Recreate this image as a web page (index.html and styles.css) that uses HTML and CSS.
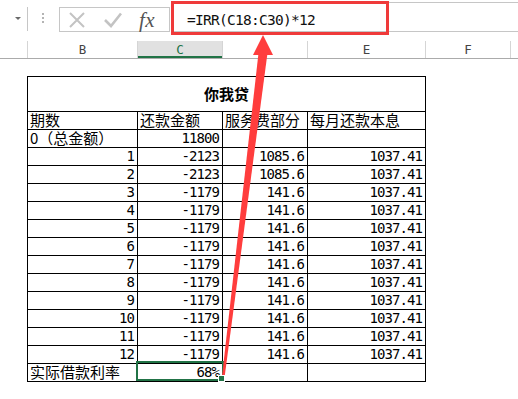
FILE: index.html
```html
<!DOCTYPE html>
<html lang="zh-CN">
<head>
<meta charset="utf-8">
<title>IRR</title>
<link rel="stylesheet" href="styles.css">
</head>
<body>
<div class="toolbar">
  <div class="namebox"><span class="caret"></span></div>
  <div class="grip"><i></i><i></i><i></i></div>
  <div class="fxbox">
    <svg class="ico-x" width="16" height="16" viewBox="0 0 16 16"><path d="M1 1 L15 15 M15 1 L1 15" stroke="#c3c3c3" stroke-width="2" fill="none"/></svg>
    <svg class="ico-ok" width="18" height="16" viewBox="0 0 18 16"><path d="M1 8 L7 14 L17 1.5" stroke="#c3c3c3" stroke-width="2.6" fill="none"/></svg>
    <span class="fx">fx</span>
  </div>
  <div class="formula">=IRR(C18:C30)*12</div>
  <div class="callout"></div>
</div>
<div class="colheads">
  <div class="ch a"></div>
  <div class="ch b">B</div>
  <div class="ch c sel">C</div>
  <div class="ch d">D</div>
  <div class="ch e">E</div>
  <div class="ch f">F</div>
  <div class="ch g"></div>
</div>
<div class="sheet">
  <div class="grid">
    <div class="cell title">你我贷</div>
    <div class="cell">期数</div><div class="cell">还款金额</div><div class="cell">服务费部分</div><div class="cell">每月还款本息</div>
    <div class="cell">0（总金额）</div><div class="cell n">11800</div><div class="cell"></div><div class="cell"></div>
    <div class="cell n">1</div><div class="cell n">-2123</div><div class="cell n">1085.6</div><div class="cell n">1037.41</div>
    <div class="cell n">2</div><div class="cell n">-2123</div><div class="cell n">1085.6</div><div class="cell n">1037.41</div>
    <div class="cell n">3</div><div class="cell n">-1179</div><div class="cell n">141.6</div><div class="cell n">1037.41</div>
    <div class="cell n">4</div><div class="cell n">-1179</div><div class="cell n">141.6</div><div class="cell n">1037.41</div>
    <div class="cell n">5</div><div class="cell n">-1179</div><div class="cell n">141.6</div><div class="cell n">1037.41</div>
    <div class="cell n">6</div><div class="cell n">-1179</div><div class="cell n">141.6</div><div class="cell n">1037.41</div>
    <div class="cell n">7</div><div class="cell n">-1179</div><div class="cell n">141.6</div><div class="cell n">1037.41</div>
    <div class="cell n">8</div><div class="cell n">-1179</div><div class="cell n">141.6</div><div class="cell n">1037.41</div>
    <div class="cell n">9</div><div class="cell n">-1179</div><div class="cell n">141.6</div><div class="cell n">1037.41</div>
    <div class="cell n">10</div><div class="cell n">-1179</div><div class="cell n">141.6</div><div class="cell n">1037.41</div>
    <div class="cell n">11</div><div class="cell n">-1179</div><div class="cell n">141.6</div><div class="cell n">1037.41</div>
    <div class="cell n">12</div><div class="cell n">-1179</div><div class="cell n">141.6</div><div class="cell n">1037.41</div>
    <div class="cell">实际借款利率</div><div class="cell n active">68%</div><div class="cell"></div><div class="cell"></div>
  </div>
</div>
<svg class="arrow" width="518" height="399" viewBox="0 0 518 399">
  <polygon points="258.5,53 267.5,53 224.2,380 221.6,380" fill="#ff3d3d"/>
  <polygon points="263,35 273,55 253,55" fill="#ff3d3d"/>
</svg>
</body>
</html>
```

FILE: styles.css
```css
html, body {
  margin: 0;
  padding: 0;
}

body {
  width: 518px;
  height: 399px;
  overflow: hidden;
  position: relative;
  background: #ffffff;
  font-family: "Noto Sans CJK SC", "Noto Sans", sans-serif;
  color: #000;
}

/* ---------- toolbar / formula bar ---------- */
.toolbar {
  position: relative;
  height: 41px;
  display: flex;
  align-items: flex-start;
}

.namebox {
  width: 28px;
  height: 24px;
  margin-top: 7px;
  box-sizing: border-box;
  border-right: 1px solid #c6c6c6;
  display: flex;
  justify-content: flex-end;
  align-items: center;
  padding-right: 6px;
}

.caret {
  width: 0;
  height: 0;
  border-left: 3.5px solid transparent;
  border-right: 3.5px solid transparent;
  border-top: 3.5px solid #6a6a6a;
  margin-top: -2px;
}

.grip {
  margin-left: 14px;
  margin-top: 13px;
  display: flex;
  flex-direction: column;
  gap: 2px;
}

.grip i {
  display: block;
  width: 2px;
  height: 2px;
  background: #b4b4b4;
}

.fxbox {
  margin-left: 15px;
  margin-top: 7px;
  width: 111px;
  height: 25px;
  box-sizing: border-box;
  border: 1px solid #c6c6c6;
  display: flex;
  align-items: center;
  padding-left: 9px;
}

.ico-x {
  display: block;
  margin-top: 1px;
}

.ico-ok {
  display: block;
  margin-left: 19px;
  margin-top: 1px;
}

.fx {
  margin-left: 17px;
  font-family: "Liberation Serif", serif;
  font-style: italic;
  font-size: 21px;
  line-height: 20px;
  color: #555;
  letter-spacing: 0.5px;
}

.formula {
  flex: 1;
  margin-top: 2px;
  margin-left: 1px;
  border-top: 1px solid #c6c6c6;
  border-bottom: 1px solid #c6c6c6;
  padding: 7px 0 1px 16px;
  font-family: "DejaVu Sans Mono", monospace;
  font-size: 14.5px;
  letter-spacing: -0.73px;
  line-height: 20px;
  color: #111;
  white-space: nowrap;
}

.callout {
  position: absolute;
  left: 171px;
  top: 1px;
  width: 218px;
  height: 34px;
  box-sizing: border-box;
  border: 3px solid #ef3a3a;
}

/* ---------- column headers ---------- */
.colheads {
  display: flex;
  height: 18px;
  box-sizing: border-box;
  border-bottom: 1px solid #ababab;
}

.ch {
  height: 17px;
  box-sizing: border-box;
  border-right: 1px solid #d5d5d5;
  text-align: center;
  font-family: "DejaVu Sans Mono", monospace;
  font-size: 12.5px;
  line-height: 16px;
  padding-top: 1px;
  color: #444;
}

.ch.a { width: 28px; }
.ch.b { width: 110px; }
.ch.c { width: 85px; }
.ch.d { width: 85px; }
.ch.e { width: 118px; }
.ch.f { width: 85px; }
.ch.g { flex: 1; border-right: none; }

.ch.sel {
  background: #e1e1e1;
  color: #217346;
  box-shadow: inset 0 -2px 0 #217346;
}

/* ---------- sheet / table ---------- */
.sheet {
  padding: 17px 0 0 27px;
}

.grid {
  display: grid;
  grid-template-columns: 110px 85px 85px 118px;
  width: max-content;
  border-left: 1px solid #000;
  border-top: 1px solid #000;
}

.cell {
  height: 18px;
  box-sizing: border-box;
  border-right: 1px solid #000;
  border-bottom: 1px solid #000;
  padding: 0 2px;
  font-size: 15px;
  line-height: 16px;
  white-space: nowrap;
  position: relative;
}

.cell.title {
  grid-column: 1 / -1;
  height: 35px;
  display: flex;
  align-items: center;
  justify-content: center;
  font-weight: 700;
  padding: 0;
}

.cell.n {
  font-family: "DejaVu Sans Mono", monospace;
  font-size: 14px;
  letter-spacing: -0.93px;
  line-height: 15px;
  text-align: right;
  padding-top: 1px;
  padding-right: 3px;
}

.cell.active::after {
  content: "";
  position: absolute;
  left: -2px;
  right: -2px;
  top: -3px;
  bottom: 0;
  border: 2px solid #217346;
}

.cell.active::before {
  content: "";
  position: absolute;
  right: -3px;
  bottom: -1px;
  width: 5px;
  height: 5px;
  background: #217346;
  border: 1px solid #fff;
  z-index: 1;
}

/* ---------- annotation arrow ---------- */
.arrow {
  position: absolute;
  left: 0;
  top: 0;
  pointer-events: none;
}
```
